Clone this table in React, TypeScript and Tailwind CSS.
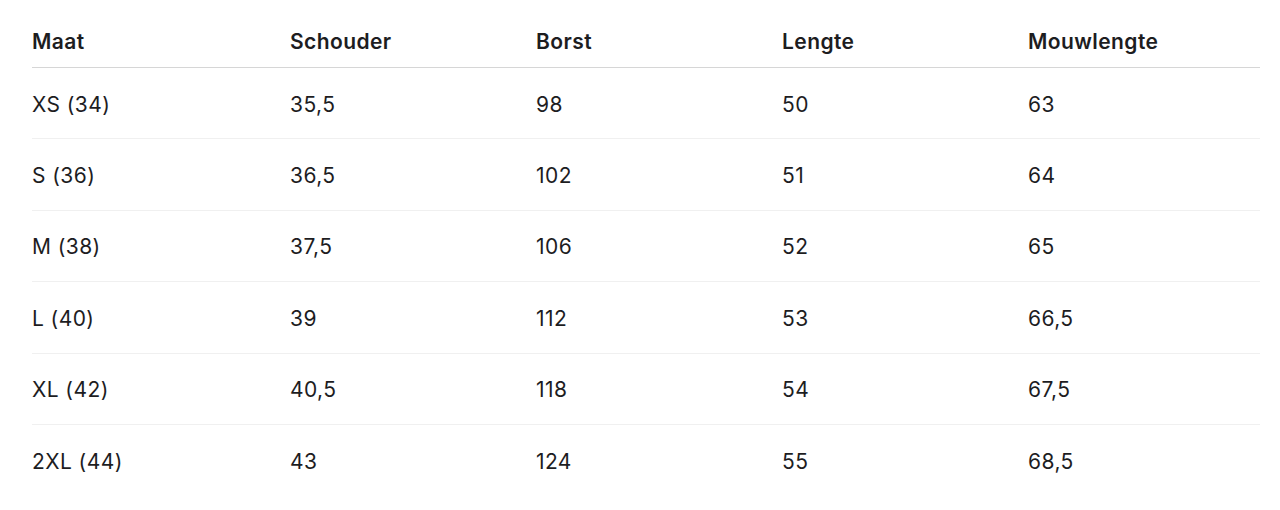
import React from "react";

const head = ["Maat", "Schouder", "Borst", "Lengte", "Mouwlengte"];
const rows = [
  ["XS (34)", "35,5", "98", "50", "63"],
  ["S (36)", "36,5", "102", "51", "64"],
  ["M (38)", "37,5", "106", "52", "65"],
  ["L (40)", "39", "112", "53", "66,5"],
  ["XL (42)", "40,5", "118", "54", "67,5"],
  ["2XL (44)", "43", "124", "55", "68,5"],
];
const widths = ["w-[258px]", "w-[246px]", "w-[246px]", "w-[246px]", "w-[232px]"];

export default function App() {
  return (
    <div className="w-[1280px] h-[510px] bg-white px-[32px] pt-[27px] text-[#1d1d1f]" style={{ fontFamily: "Inter, 'Noto Sans', sans-serif" }}>
      <table className="w-[1228px] border-collapse table-fixed text-[21px] tracking-[0.02em]">
        <colgroup>
          {widths.map((w, i) => (
            <col key={i} className={w} />
          ))}
        </colgroup>
        <thead>
          <tr className="border-b border-[#d6d6d6]">
            {head.map((h) => (
              <th key={h} className="text-left font-semibold leading-[30px] pb-[10px] p-0">
                {h}
              </th>
            ))}
          </tr>
        </thead>
        <tbody>
          {rows.map((r, i) => (
            <tr key={i} className={i < rows.length - 1 ? "border-b border-[#f0f0f0]" : ""}>
              {r.map((c, j) => (
                <td key={j} className="text-left font-normal leading-[29.9px] pt-[21.5px] pb-[19px] px-0">
                  {c}
                </td>
              ))}
            </tr>
          ))}
        </tbody>
      </table>
    </div>
  );
}
